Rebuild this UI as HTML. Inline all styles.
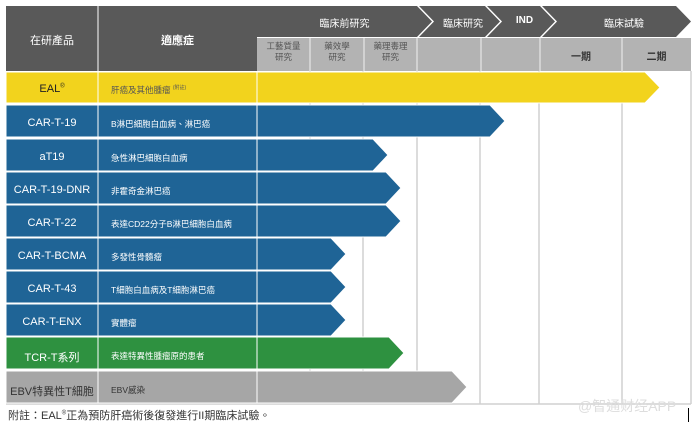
<!DOCTYPE html>
<html><head><meta charset="utf-8"><style>
body{margin:0;width:695px;height:423px;background:#fff;overflow:hidden;font-family:"Liberation Sans","Noto Sans CJK TC",sans-serif;}
svg{position:absolute;left:0;top:0}
.t{position:absolute;font-size:11px;color:#fff;white-space:nowrap}
.c{text-align:center}
.r{margin-top:2px}
</style></head><body>
<svg width="695" height="423">
<g stroke="#d0d0d0" stroke-width="1.5">
<line x1="310" y1="71" x2="310" y2="404"/><line x1="363" y1="71" x2="363" y2="404"/>
<line x1="417" y1="71" x2="417" y2="404"/><line x1="480" y1="71" x2="480" y2="404"/>
<line x1="539" y1="71" x2="539" y2="404"/><line x1="622" y1="71" x2="622" y2="404"/>
<line x1="691" y1="71" x2="691" y2="404"/>
<line x1="6" y1="404" x2="691" y2="404"/>
</g>
<rect x="6" y="6" width="251" height="65" fill="#595959"/>
<line x1="98" y1="6" x2="98" y2="71" stroke="#fff" stroke-width="1"/>
<polygon points="257,6 417,6 432,21.5 417,37 257,37" fill="#595959"/>
<polygon points="419,6 485,6 500,21.5 485,37 419,37 434,21.5" fill="#595959"/>
<polygon points="487,6 540,6 555,21.5 540,37 487,37 502,21.5" fill="#595959"/>
<polygon points="542,6 676,6 691,21.5 676,37 542,37 557,21.5" fill="#595959"/>
<rect x="257" y="38" width="434" height="33" fill="#b3b3b3"/>
<g stroke="#e6e6e6" stroke-width="1.2">
<line x1="310" y1="38" x2="310" y2="71"/><line x1="364" y1="38" x2="364" y2="71"/>
<line x1="417" y1="38" x2="417" y2="71"/><line x1="481" y1="38" x2="481" y2="71"/>
<line x1="540" y1="38" x2="540" y2="71"/><line x1="622" y1="38" x2="622" y2="71"/>
</g>
<g stroke="#fff" stroke-width="1">
<polygon points="6,72 645,72 660,87.5 645,103 6,103" fill="#f2d31d"/>
<polygon points="6,105 490,105 505,121 490,137 6,137" fill="#1f6496"/>
<polygon points="6,139 373,139 388,155 373,171 6,171" fill="#1f6496"/>
<polygon points="6,172 386,172 401,188 386,204 6,204" fill="#1f6496"/>
<polygon points="6,205 386,205 401,221 386,237 6,237" fill="#1f6496"/>
<polygon points="6,238 331,238 346,254 331,270 6,270" fill="#1f6496"/>
<polygon points="6,271 331,271 346,287 331,303 6,303" fill="#1f6496"/>
<polygon points="6,304 331,304 346,320 331,336 6,336" fill="#1f6496"/>
<polygon points="6,337 389,337 404,353 389,369 6,369" fill="#2e9140"/>
<polygon points="6,371 452,371 467,387 452,403 6,403" fill="#a6a6a6"/>
<line x1="98" y1="71" x2="98" y2="403"/><line x1="257" y1="71" x2="257" y2="403"/>
</g>
</svg>
<div class="t c" style="left:6px;width:92px;top:32px;">在研產品</div>
<div class="t c" style="left:98px;width:159px;top:32px;font-weight:bold">適應症</div>
<div class="t c" style="left:257px;width:175px;top:15px;font-size:10px">臨床前研究</div>
<div class="t c" style="left:432px;width:62px;top:15px;font-size:10px">臨床研究</div>
<div class="t c" style="left:497px;width:55px;top:15px;font-size:10px;font-weight:bold">IND</div>
<div class="t c" style="left:557px;width:134px;top:15px;font-size:10px">臨床試驗</div>
<div class="t c" style="left:257px;width:53px;top:41px;font-size:8.5px;color:#555;line-height:11px">工藝質量<br>研究</div>
<div class="t c" style="left:310px;width:54px;top:41px;font-size:8.5px;color:#555;line-height:11px">藥效學<br>研究</div>
<div class="t c" style="left:364px;width:53px;top:41px;font-size:8.5px;color:#555;line-height:11px">藥理毒理<br>研究</div>
<div class="t c" style="left:540px;width:82px;top:48px;font-size:10px;color:#333;font-weight:bold">一期</div>
<div class="t c" style="left:622px;width:69px;top:48px;font-size:10px;color:#333;font-weight:bold">二期</div>

<div class="t c r" style="left:6px;width:92px;top:81px;color:#222">EAL<sup style="font-size:6px">®</sup></div>
<div class="t r" style="left:111px;top:82px;font-size:8.5px;color:#555">肝癌及其他腫瘤 <sup style="font-size:5px">(附註)</sup></div>
<div class="t c r" style="left:6px;width:92px;top:115px">CAR-T-19</div>
<div class="t r" style="left:111px;top:116px;font-size:8.5px">B淋巴細胞白血病、淋巴癌</div>
<div class="t c r" style="left:6px;width:92px;top:149px">aT19</div>
<div class="t r" style="left:111px;top:150px;font-size:8.5px">急性淋巴細胞白血病</div>
<div class="t c r" style="left:6px;width:92px;top:182px">CAR-T-19-DNR</div>
<div class="t r" style="left:111px;top:183px;font-size:8.5px">非霍奇金淋巴癌</div>
<div class="t c r" style="left:6px;width:92px;top:215px">CAR-T-22</div>
<div class="t r" style="left:111px;top:216px;font-size:8.5px">表達CD22分子B淋巴細胞白血病</div>
<div class="t c r" style="left:6px;width:92px;top:248px">CAR-T-BCMA</div>
<div class="t r" style="left:111px;top:249px;font-size:8.5px">多發性骨髓瘤</div>
<div class="t c r" style="left:6px;width:92px;top:281px">CAR-T-43</div>
<div class="t r" style="left:111px;top:282px;font-size:8.5px">T細胞白血病及T細胞淋巴癌</div>
<div class="t c r" style="left:6px;width:92px;top:314px">CAR-T-ENX</div>
<div class="t r" style="left:111px;top:315px;font-size:8.5px">實體瘤</div>
<div class="t c r" style="left:6px;width:92px;top:347px">TCR-T系列</div>
<div class="t r" style="left:111px;top:348px;font-size:8.5px">表達特異性腫瘤原的患者</div>
<div class="t c r" style="left:6px;width:92px;top:381px;color:#333">EBV特異性T細胞</div>
<div class="t r" style="left:111px;top:382px;font-size:8.5px;color:#333">EBV感染</div>
<div class="t" style="left:8px;top:407px;font-size:11px;color:#333">附註：EAL<sup style="font-size:6px">®</sup>正為預防肝癌術後復發進行II期臨床試驗。</div>
<div class="t" style="left:578px;top:396px;font-size:14px;color:#ddd">@智通财经APP</div>
<div style="position:absolute;left:688px;top:408px;width:1px;height:14px;background:#000"></div>
</body></html>
